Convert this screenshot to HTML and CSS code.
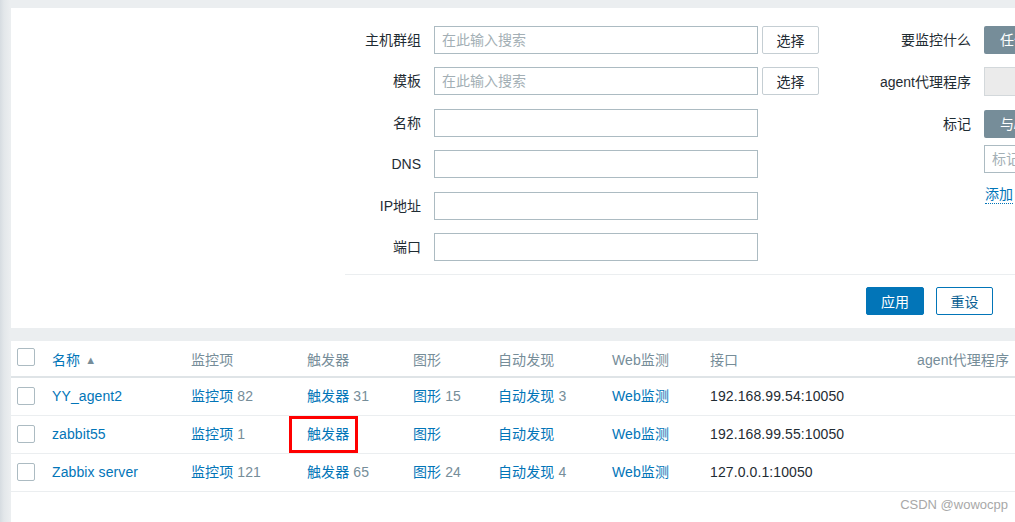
FILE: index.html
```html
<!DOCTYPE html>
<html lang="zh">
<head>
<meta charset="utf-8">
<title>主机</title>
<link rel="stylesheet" href="styles.css">
</head>
<body>
<div class="page">
  <section class="filter">
    <div class="filter-body">
      <div class="col-left">
        <div class="frow"><label class="lbl">主机群组</label><input class="inp" placeholder="在此输入搜索"><button class="btn-sel">选择</button></div>
        <div class="frow"><label class="lbl">模板</label><input class="inp" placeholder="在此输入搜索"><button class="btn-sel">选择</button></div>
        <div class="frow"><label class="lbl">名称</label><input class="inp"></div>
        <div class="frow"><label class="lbl">DNS</label><input class="inp"></div>
        <div class="frow"><label class="lbl">IP地址</label><input class="inp"></div>
        <div class="frow"><label class="lbl">端口</label><input class="inp"></div>
      </div>
      <div class="col-right">
        <div class="frow"><label class="lbl-r">要监控什么</label><div class="seg"><span class="seg-on">任何</span><span class="seg-off">服务器</span></div></div>
        <div class="frow"><label class="lbl-r">agent代理程序</label><div class="sel-dis"></div></div>
        <div class="frow tagrow"><label class="lbl-r">标记</label><div class="seg"><span class="seg-on">与/或</span><span class="seg-off">或</span></div></div>
        <div class="frow-sub"><input class="inp-tag" placeholder="标记"></div>
        <div class="frow-add"><a class="add-link">添加</a></div>
      </div>
    </div>
    <div class="divider"></div>
    <div class="filter-foot">
      <button class="btn-apply">应用</button>
      <button class="btn-reset">重设</button>
    </div>
  </section>

  <section class="list">
    <table class="tbl">
      <colgroup>
        <col class="c-cb"><col class="c-name"><col class="c-items"><col class="c-trig"><col class="c-graph"><col class="c-disc"><col class="c-web"><col class="c-if"><col class="c-proxy"><col class="c-tpl">
      </colgroup>
      <thead>
        <tr>
          <th><span class="cb"></span></th>
          <th><a class="lnk">名称</a> <span class="arrow">▲</span></th>
          <th>监控项</th>
          <th>触发器</th>
          <th>图形</th>
          <th>自动发现</th>
          <th>Web监测</th>
          <th>接口</th>
          <th class="right">agent代理程序</th>
          <th>模板</th>
        </tr>
      </thead>
      <tbody>
        <tr>
          <td><span class="cb"></span></td>
          <td><a class="lnk">YY_agent2</a></td>
          <td><a class="lnk">监控项</a> <span class="cnt">82</span></td>
          <td><a class="lnk">触发器</a> <span class="cnt">31</span></td>
          <td><a class="lnk">图形</a> <span class="cnt">15</span></td>
          <td><a class="lnk">自动发现</a> <span class="cnt">3</span></td>
          <td><a class="lnk">Web监测</a></td>
          <td>192.168.99.54:10050</td>
          <td></td>
          <td></td>
        </tr>
        <tr>
          <td><span class="cb"></span></td>
          <td><a class="lnk">zabbit55</a></td>
          <td><a class="lnk">监控项</a> <span class="cnt">1</span></td>
          <td><span class="marked"><a class="lnk">触发器</a></span></td>
          <td><a class="lnk">图形</a></td>
          <td><a class="lnk">自动发现</a></td>
          <td><a class="lnk">Web监测</a></td>
          <td>192.168.99.55:10050</td>
          <td></td>
          <td></td>
        </tr>
        <tr>
          <td><span class="cb"></span></td>
          <td><a class="lnk">Zabbix server</a></td>
          <td><a class="lnk">监控项</a> <span class="cnt">121</span></td>
          <td><a class="lnk">触发器</a> <span class="cnt">65</span></td>
          <td><a class="lnk">图形</a> <span class="cnt">24</span></td>
          <td><a class="lnk">自动发现</a> <span class="cnt">4</span></td>
          <td><a class="lnk">Web监测</a></td>
          <td>127.0.0.1:10050</td>
          <td></td>
          <td></td>
        </tr>
      </tbody>
    </table>
  </section>
</div>
<div class="watermark">CSDN @wowocpp</div>
</body>
</html>
```

FILE: styles.css
```css
html, body {
  margin: 0;
  padding: 0;
  height: 100%;
  overflow: hidden;
}
body {
  background: linear-gradient(to right, #d6dce1 0px, #e3e7ea 4px, #ebeef0 10px) no-repeat, #ebeef0;
  background-size: 11px 100%, auto;
  font-family: "Liberation Sans", Arial, "Noto Sans CJK SC", sans-serif;
  font-size: 14px;
  color: #1f2c33;
  position: relative;
}
.page {
  width: 1500px;
  padding: 8px 0 0 11px;
  box-sizing: border-box;
  height: 100%;
  display: flex;
  flex-direction: column;
}
.filter {
  background: #fff;
  padding-top: 18px;
}
.filter-body {
  display: flex;
  align-items: flex-start;
  padding-left: 334px;
}
.col-left {
  display: flex;
  flex-direction: column;
  gap: 13.4px;
  width: 474px;
}
.col-right {
  display: flex;
  flex-direction: column;
  margin-left: 26px;
}
.frow {
  display: flex;
  align-items: center;
  height: 28px;
}
.col-right .frow + .frow { margin-top: 13.4px; }
.col-right .frow:nth-child(2) { height: 29px; }
.lbl {
  width: 76px;
  margin-right: 13px;
  text-align: right;
  line-height: 16px;
  white-space: nowrap;
}
.lbl-r {
  width: 126px;
  margin-right: 13px;
  text-align: right;
  line-height: 16px;
  white-space: nowrap;
}
.inp {
  width: 324px;
  height: 28px;
  box-sizing: border-box;
  border: 1px solid #acbbc2;
  padding: 0 7px;
  font: inherit;
  color: #1f2c33;
  background: #fff;
  outline: none;
  margin: 0;
}
.inp::placeholder, .inp-tag::placeholder { color: #a3afb5; }
.btn-sel {
  margin-left: 4px;
  width: 57px;
  height: 28px;
  box-sizing: border-box;
  border: 1px solid #c5ced3;
  border-radius: 2px;
  background: #fff;
  font: inherit;
  color: #1f2c33;
  padding: 0;
}
.seg {
  display: flex;
  height: 28px;
}
.seg-on {
  background: #768d99;
  color: #fff;
  border-radius: 2px 0 0 2px;
  padding: 0 16px;
  line-height: 28px;
  white-space: nowrap;
}
.seg-off {
  border: 1px solid #acbbc2;
  padding: 0 16px;
  line-height: 26px;
  white-space: nowrap;
}
.sel-dis {
  width: 200px;
  height: 29px;
  box-sizing: border-box;
  background: #ebebeb;
  border: 1px solid #d3d8db;
}
.frow-sub {
  margin-top: 7px;
  padding-left: 139px;
}
.inp-tag {
  width: 200px;
  height: 28px;
  box-sizing: border-box;
  border: 1px solid #acbbc2;
  padding: 0 7px;
  font: inherit;
  outline: none;
  margin: 0;
  display: block;
}
.frow-add {
  margin-top: 13px;
  padding-left: 140px;
  line-height: 16px;
}
.add-link {
  color: #0275b8;
  border-bottom: 1px dotted #0275b8;
  padding-bottom: 1px;
}
.divider {
  margin: 13px 0 0 334px;
  height: 1px;
  background: #ebeef0;
}
.filter-foot {
  display: flex;
  gap: 12px;
  padding: 12px 0 13px 855px;
}
.btn-apply, .btn-reset {
  height: 28px;
  box-sizing: border-box;
  border-radius: 2px;
  font: inherit;
  padding: 0;
}
.btn-apply {
  width: 58px;
  background: #0275b8;
  border: 1px solid #0275b8;
  color: #fff;
}
.btn-reset {
  width: 57px;
  background: #fff;
  border: 1px solid #0275b8;
  color: #0a5f93;
}
.list {
  margin-top: 13px;
  background: #fff;
  flex: 1;
}
.tbl {
  border-collapse: collapse;
  table-layout: fixed;
  width: 1300px;
  letter-spacing: 0.1px;
}
.c-cb { width: 35px; }
.c-name { width: 139px; }
.c-items { width: 116px; }
.c-trig { width: 106px; }
.c-graph { width: 85px; }
.c-disc { width: 114px; }
.c-web { width: 98px; }
.c-if { width: 200px; }
.c-proxy { width: 111px; }
.c-tpl { width: 296px; }
.tbl th, .tbl td {
  padding: 0 6px;
  text-align: left;
  white-space: nowrap;
  line-height: 16px;
}
.tbl th {
  height: 32px;
  padding-top: 3px;
  font-weight: normal;
  color: #768d99;
  border-bottom: 2px solid #dfe4e7;
}
.tbl th.right { text-align: right; }
.tbl td {
  height: 37px;
  border-bottom: 1px solid #ebeef0;
}
.cb {
  display: block;
  width: 18px;
  height: 18px;
  box-sizing: border-box;
  border: 1px solid #acbbc2;
  border-radius: 2px;
  background: #fff;
}
.tbl th .cb { margin-top: -6px; }
.lnk { color: #0275b8; text-decoration: none; }
.cnt { color: #768d99; }
.arrow {
  color: #768d99;
  font-size: 11px;
  vertical-align: 1px;
  margin-left: 1px;
}
.marked {
  position: relative;
  display: inline-block;
  height: 16px;
}
.marked::after {
  content: "";
  position: absolute;
  left: -18px;
  right: -9px;
  top: -10px;
  bottom: -11px;
  border: 3px solid #ff0000;
  pointer-events: none;
}
.watermark {
  position: absolute;
  right: 7px;
  top: 497px;
  font-size: 13px;
  line-height: 16px;
  color: #a8a8a8;
  white-space: nowrap;
}
```
